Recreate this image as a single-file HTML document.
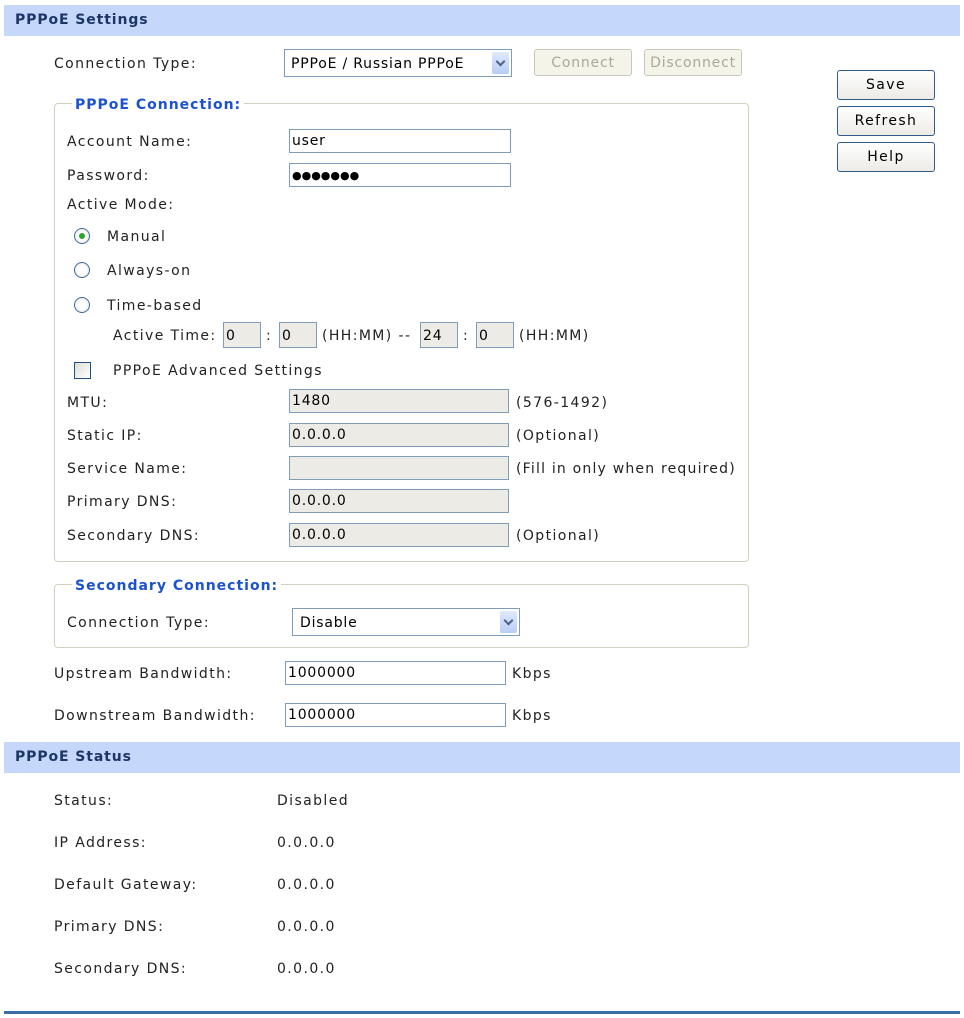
<!DOCTYPE html>
<html><head><meta charset="utf-8"><style>
body{margin:0;width:964px;height:1018px;background:#fff;position:relative;overflow:hidden;font-family:"DejaVu Sans","Liberation Sans",sans-serif;font-size:14px;color:#222;letter-spacing:1.4px}
.a{position:absolute;white-space:nowrap;line-height:16px}
.hd{position:absolute;left:4px;width:956px;height:31px;background:#c5d8fb;}
.hd span{position:absolute;left:11px;top:7px;font-weight:bold;color:#1c3566;font-size:14px;letter-spacing:0.9px}
.in{position:absolute;border:1px solid #7f9db9;background:#fff;box-sizing:border-box;font-size:14px;line-height:23px;padding-left:2px;color:#000;white-space:nowrap;letter-spacing:0.8px}
.g{background:#ecebe5}
.fs{position:absolute;border:1px solid #d0d0bf;border-radius:4px;box-sizing:border-box}
.lg{position:absolute;background:#fff;color:#1a52cf;font-weight:bold;padding:0 3px;line-height:16px;letter-spacing:1px}
.btn{position:absolute;box-sizing:border-box;border:1px solid #2f5a8c;border-radius:3px;background:linear-gradient(#fff,#ecebe6);text-align:center;line-height:28px;color:#000}
.dbtn{position:absolute;box-sizing:border-box;border:1px solid #c9c7ba;border-radius:3px;background:#f5f4ea;text-align:center;line-height:27px;color:#aca899;letter-spacing:0.8px;white-space:nowrap;overflow:hidden}
.arr{position:absolute;right:2px;top:2px;width:17px;bottom:2px;background:linear-gradient(#e0e9fd,#b7cdf7);border-radius:2px}
.arr:after{content:"";position:absolute;left:5px;top:6px;width:5px;height:5px;border-right:2px solid #4d6185;border-bottom:2px solid #4d6185;transform:rotate(45deg)}
.rd{position:absolute;width:14px;height:14px;border:1px solid #3f6c9d;border-radius:50%;background:radial-gradient(#fff 40%,#dcdcd5)}
</style></head><body>
<div class="hd" style="top:5px"><span>PPPoE Settings</span></div>
<div class="a" style="left:54px;top:56px">Connection Type:</div>
<div class="in" style="left:284px;top:49px;width:228px;height:28px;line-height:28px;padding-left:6px">PPPoE / Russian PPPoE<div class="arr"></div></div>
<div class="dbtn" style="left:534px;top:49px;width:98px;height:27px">Connect</div>
<div class="dbtn" style="left:644px;top:49px;width:98px;height:27px">Disconnect</div>
<div class="btn" style="left:837px;top:70px;width:98px;height:30px">Save</div>
<div class="btn" style="left:837px;top:106px;width:98px;height:30px">Refresh</div>
<div class="btn" style="left:837px;top:142px;width:98px;height:30px">Help</div>

<div class="fs" style="left:54px;top:103px;width:695px;height:459px"></div>
<div class="lg" style="left:72px;top:97px">PPPoE Connection:</div>
<div class="a" style="left:67px;top:134px">Account Name:</div>
<div class="in" style="left:289px;top:129px;width:222px;height:24px">user</div>
<div class="a" style="left:67px;top:168px">Password:</div>
<div class="in" style="left:289px;top:163px;width:222px;height:24px;font-size:11px;letter-spacing:0">●●●●●●●</div>
<div class="a" style="left:67px;top:197px">Active Mode:</div>
<div class="rd" style="left:74px;top:228px"><div style="position:absolute;left:4px;top:4px;width:6px;height:6px;border-radius:50%;background:#2ea52e"></div></div>
<div class="a" style="left:107px;top:229px">Manual</div>
<div class="rd" style="left:74px;top:262px"></div>
<div class="a" style="left:107px;top:263px">Always-on</div>
<div class="rd" style="left:74px;top:297px"></div>
<div class="a" style="left:107px;top:298px">Time-based</div>
<div class="a" style="left:113px;top:328px">Active Time:</div>
<div class="in g" style="left:223px;top:322px;width:38px;height:26px;line-height:26px">0</div>
<div class="a" style="left:266px;top:328px">:</div>
<div class="in g" style="left:279px;top:322px;width:38px;height:26px;line-height:26px">0</div>
<div class="a" style="left:322px;top:328px">(HH:MM) --</div>
<div class="in g" style="left:420px;top:322px;width:38px;height:26px;line-height:26px">24</div>
<div class="a" style="left:463px;top:328px">:</div>
<div class="in g" style="left:476px;top:322px;width:38px;height:26px;line-height:26px">0</div>
<div class="a" style="left:519px;top:328px">(HH:MM)</div>
<div style="position:absolute;left:74px;top:362px;width:17px;height:17px;box-sizing:border-box;border:1px solid #1c5180;background:linear-gradient(135deg,#dcdcd7,#fff)"></div>
<div class="a" style="left:113px;top:363px">PPPoE Advanced Settings</div>
<div class="a" style="left:67px;top:395px">MTU:</div>
<div class="in g" style="left:289px;top:389px;width:220px;height:24px">1480</div>
<div class="a" style="left:516px;top:395px">(576-1492)</div>
<div class="a" style="left:67px;top:428px">Static IP:</div>
<div class="in g" style="left:289px;top:423px;width:220px;height:24px">0.0.0.0</div>
<div class="a" style="left:516px;top:428px">(Optional)</div>
<div class="a" style="left:67px;top:461px">Service Name:</div>
<div class="in g" style="left:289px;top:456px;width:220px;height:24px"></div>
<div class="a" style="left:516px;top:461px;letter-spacing:1.2px">(Fill in only when required)</div>
<div class="a" style="left:67px;top:494px">Primary DNS:</div>
<div class="in g" style="left:289px;top:489px;width:220px;height:24px">0.0.0.0</div>
<div class="a" style="left:67px;top:528px">Secondary DNS:</div>
<div class="in g" style="left:289px;top:523px;width:220px;height:24px">0.0.0.0</div>
<div class="a" style="left:516px;top:528px">(Optional)</div>

<div class="fs" style="left:54px;top:584px;width:695px;height:64px"></div>
<div class="lg" style="left:72px;top:578px">Secondary Connection:</div>
<div class="a" style="left:67px;top:615px">Connection Type:</div>
<div class="in" style="left:292px;top:608px;width:228px;height:28px;line-height:28px;padding-left:7px">Disable<div class="arr"></div></div>

<div class="a" style="left:54px;top:666px">Upstream Bandwidth:</div>
<div class="in" style="left:285px;top:661px;width:221px;height:24px">1000000</div>
<div class="a" style="left:512px;top:666px">Kbps</div>
<div class="a" style="left:54px;top:708px">Downstream Bandwidth:</div>
<div class="in" style="left:285px;top:703px;width:221px;height:24px">1000000</div>
<div class="a" style="left:512px;top:708px">Kbps</div>

<div class="hd" style="top:742px"><span>PPPoE Status</span></div>
<div class="a" style="left:54px;top:793px">Status:</div><div class="a" style="left:277px;top:793px">Disabled</div>
<div class="a" style="left:54px;top:835px">IP Address:</div><div class="a" style="left:277px;top:835px">0.0.0.0</div>
<div class="a" style="left:54px;top:877px">Default Gateway:</div><div class="a" style="left:277px;top:877px">0.0.0.0</div>
<div class="a" style="left:54px;top:919px">Primary DNS:</div><div class="a" style="left:277px;top:919px">0.0.0.0</div>
<div class="a" style="left:54px;top:961px">Secondary DNS:</div><div class="a" style="left:277px;top:961px">0.0.0.0</div>
<div style="position:absolute;left:4px;top:1011px;width:956px;height:3px;background:#3a6ea5"></div>
</body></html>
